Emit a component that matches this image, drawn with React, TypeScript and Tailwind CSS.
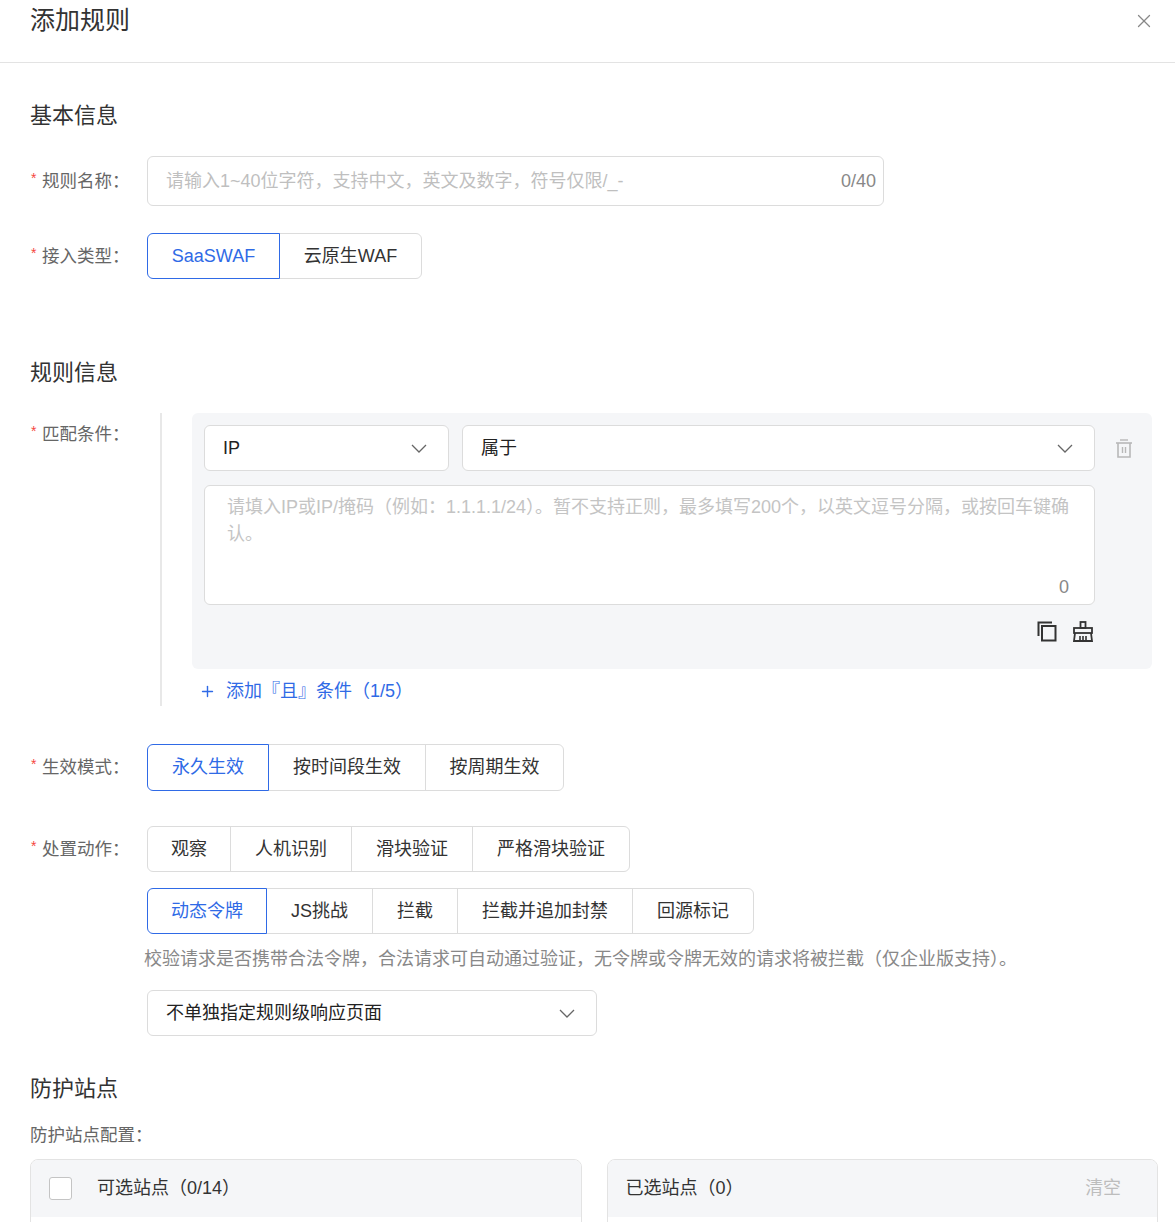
import { Plus, X } from 'lucide-react'

interface SegItem {
  label: string
  w: string
  active?: boolean
}

const accessTypes: SegItem[] = [
  { label: 'SaaSWAF', w: 'w-[133px]', active: true },
  { label: '云原生WAF', w: 'w-[143px]' },
]

const effectModes: SegItem[] = [
  { label: '永久生效', w: 'w-[122px]', active: true },
  { label: '按时间段生效', w: 'w-[158px]' },
  { label: '按周期生效', w: 'w-[139px]' },
]

const actionsRow1: SegItem[] = [
  { label: '观察', w: 'w-[84px]' },
  { label: '人机识别', w: 'w-[122px]' },
  { label: '滑块验证', w: 'w-[122px]' },
  { label: '严格滑块验证', w: 'w-[158px]' },
]

const actionsRow2: SegItem[] = [
  { label: '动态令牌', w: 'w-[120px]', active: true },
  { label: 'JS挑战', w: 'w-[107px]' },
  { label: '拦截', w: 'w-[86px]' },
  { label: '拦截并追加封禁', w: 'w-[176px]' },
  { label: '回源标记', w: 'w-[122px]' },
]

function Chevron() {
  return (
    <svg width="16" height="9" viewBox="0 0 16 9" fill="none" className="shrink-0">
      <polyline points="1,1 8,8 15,1" stroke="#666" strokeWidth="1.3" />
    </svg>
  )
}

function Segmented({ items, h = 'h-[46px]' }: { items: SegItem[]; h?: string }) {
  return (
    <div className="flex">
      {items.map((it, i) => (
        <div
          key={it.label}
          className={`${it.w} ${h} flex items-center justify-center border text-[18px] ${
            i > 0 ? '-ml-px' : ''
          } ${i === 0 ? 'rounded-l-[6px]' : ''} ${i === items.length - 1 ? 'rounded-r-[6px]' : ''} ${
            it.active
              ? 'relative z-10 border-[#2f6ae6] text-[#2f6ae6]'
              : 'border-[#dcdcdc] text-[#333]'
          }`}
        >
          {it.label}
        </div>
      ))}
    </div>
  )
}

function Label({ text, h }: { text: string; h: string }) {
  return (
    <div className={`w-[117px] shrink-0 ${h} flex items-center text-[17.5px] text-[#666]`}>
      <span className="w-[12px] pl-[1px] text-[14px] text-[#f5473e] self-center -translate-y-[3px]">*</span>
      <span>{text}：</span>
    </div>
  )
}

function CopyIcon() {
  return (
    <svg width="20" height="21" viewBox="0 0 20 21" fill="none">
      <path d="M1.5 15V1.5H15" stroke="#333" strokeWidth="2" />
      <rect x="5" y="5" width="13.5" height="14.5" stroke="#333" strokeWidth="2" />
    </svg>
  )
}

function BroomIcon() {
  return (
    <svg width="22" height="21" viewBox="0 0 22 21" fill="none">
      <rect x="8.5" y="1" width="5" height="6" stroke="#333" strokeWidth="1.8" />
      <rect x="2" y="7" width="18" height="5" stroke="#333" strokeWidth="1.8" />
      <path d="M3 12L2 20H20L19 12" stroke="#333" strokeWidth="1.8" />
      <path d="M8 15V20M11 15V20M14 15V20" stroke="#333" strokeWidth="1.6" />
    </svg>
  )
}

function TrashIcon() {
  return (
    <svg width="18" height="19" viewBox="0 0 18 19" fill="none">
      <path d="M5 1H13" stroke="#b8b8b8" strokeWidth="1.4" />
      <path d="M1 4H17" stroke="#b8b8b8" strokeWidth="1.6" />
      <path d="M3 4V18H15V4" stroke="#b8b8b8" strokeWidth="1.6" />
      <path d="M7.5 8V14M10.5 8V14" stroke="#b8b8b8" strokeWidth="1.4" />
    </svg>
  )
}

export default function App() {
  return (
    <div className="w-[1175px] h-[1222px] overflow-hidden bg-white text-[#333] font-['Liberation_Sans','Noto_Sans_CJK_SC',sans-serif]">
      {/* Header */}
      <div className="h-[63px] border-b border-[#e3e3e3] flex items-start justify-between pl-[30px] pr-[20px]">
        <h1 className="text-[25px] leading-[40px] text-[#333]">添加规则</h1>
        <X className="mt-[10px] w-[22px] h-[22px] text-[#888]" strokeWidth={1.4} />
      </div>

      <div className="flex h-[1159px]">
        {/* Main */}
        <div className="flex-1 pl-[30px] pr-[18px] flex flex-col">
          <h2 className="mt-[38px] text-[22px] leading-[30px] text-[#333]">基本信息</h2>

          <div className="mt-[25px] flex">
            <Label text="规则名称" h="h-[50px]" />
            <div className="w-[737px] h-[50px] border border-[#dcdcdc] rounded-[6px] flex items-center justify-between pl-[18px] pr-[7px] text-[18px]">
              <span className="text-[#bfbfbf]">请输入1~40位字符，支持中文，英文及数字，符号仅限/_-</span>
              <span className="text-[#888]">0/40</span>
            </div>
          </div>

          <div className="mt-[27px] flex">
            <Label text="接入类型" h="h-[46px]" />
            <Segmented items={accessTypes} />
          </div>

          <h2 className="mt-[79px] text-[22px] leading-[30px] text-[#333]">规则信息</h2>

          <div className="mt-[25px] flex">
            <Label text="匹配条件" h="h-[42px] self-start" />
            <div className="flex-1 mr-[6px] ml-[13px] border-l-2 border-[#e8e8e8] pl-[30px] pb-[3px]">
              <div className="bg-[#f5f6f8] rounded-[6px] pt-[12px] pl-[12px] pb-[27px]">
                <div className="flex items-center">
                  <div className="w-[245px] h-[46px] bg-white border border-[#dcdcdc] rounded-[6px] flex items-center justify-between pl-[18px] pr-[21px] text-[18px] text-[#222]">
                    <span>IP</span>
                    <Chevron />
                  </div>
                  <div className="ml-[13px] flex-1 h-[46px] bg-white border border-[#dcdcdc] rounded-[6px] flex items-center justify-between pl-[18px] pr-[21px] text-[18px] text-[#222]">
                    <span>属于</span>
                    <Chevron />
                  </div>
                  <div className="w-[57px] flex justify-center">
                    <TrashIcon />
                  </div>
                </div>
                <div className="mt-[14px] mr-[57px] h-[120px] bg-white border border-[#dcdcdc] rounded-[6px] flex flex-col justify-between pl-[22px] pr-[25px] pt-[8px] pb-[5px] text-[18px] leading-[27px]">
                  <div className="text-[#c4c4c4]">
                    <div className="whitespace-nowrap">请填入IP或IP/掩码（例如：1.1.1.1/24）。暂不支持正则，最多填写200个，以英文逗号分隔，或按回车键确</div>
                    <div>认。</div>
                  </div>
                  <div className="self-end text-[#888] leading-[24px]">0</div>
                </div>
                <div className="mt-[16px] mr-[58px] flex justify-end items-center gap-[15px]">
                  <CopyIcon />
                  <BroomIcon />
                </div>
              </div>
              <div className="mt-[10px] ml-[7px] h-[24px] flex items-center gap-[10px] text-[18px] text-[#2f6ae6]">
                <Plus className="w-[17px] h-[17px]" strokeWidth={2} />
                <span>添加『且』条件（1/5）</span>
              </div>
            </div>
          </div>

          <div className="mt-[38px] flex">
            <Label text="生效模式" h="h-[47px]" />
            <Segmented items={effectModes} h="h-[47px]" />
          </div>

          <div className="mt-[35px] flex">
            <Label text="处置动作" h="h-[46px] self-start" />
            <div className="flex flex-col items-start">
              <Segmented items={actionsRow1} />
              <div className="mt-[16px]">
                <Segmented items={actionsRow2} />
              </div>
              <p className="mt-[13px] -ml-[3px] text-[18px] leading-[24px] text-[#888] whitespace-nowrap">
                校验请求是否携带合法令牌，合法请求可自动通过验证，无令牌或令牌无效的请求将被拦截（仅企业版支持）。
              </p>
              <div className="mt-[19px] w-[450px] h-[46px] border border-[#dcdcdc] rounded-[6px] flex items-center justify-between pl-[18px] pr-[21px] text-[18px] text-[#222]">
                <span>不单独指定规则级响应页面</span>
                <Chevron />
              </div>
            </div>
          </div>

          <h2 className="mt-[38px] text-[22px] leading-[30px] text-[#333]">防护站点</h2>
          <div className="mt-[19px] text-[17.5px] leading-[24px] text-[#666]">防护站点配置：</div>

          <div className="mt-[12px] flex gap-[25px]">
            <div className="flex-1 h-[120px] border border-[#e3e3e3] rounded-t-[8px] overflow-hidden">
              <div className="h-[57px] bg-[#f5f6f8] flex items-center pl-[18px] text-[18px] text-[#333]">
                <div className="w-[23px] h-[23px] bg-white border border-[#c4c4c4] rounded-[3px]" />
                <span className="ml-[25px]">可选站点（0/14）</span>
              </div>
            </div>
            <div className="flex-1 h-[120px] border border-[#e3e3e3] rounded-t-[8px] overflow-hidden">
              <div className="h-[57px] bg-[#f5f6f8] flex items-center justify-between pl-[18px] pr-[36px] text-[18px]">
                <span className="text-[#333]">已选站点（0）</span>
                <span className="text-[#bdbdbd]">清空</span>
              </div>
            </div>
          </div>
        </div>

        {/* Scrollbar */}
        <div className="w-[6px] bg-[#f1f1f1] flex flex-col">
          <div className="mt-[25px] ml-[2px] flex-1 bg-[#c1c1c1]" />
        </div>
      </div>
    </div>
  )
}
